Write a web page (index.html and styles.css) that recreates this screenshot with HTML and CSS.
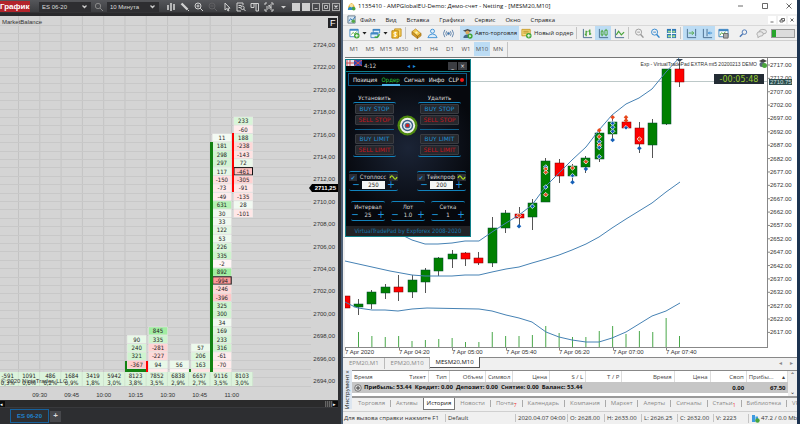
FILE: index.html
```html
<!DOCTYPE html>
<html lang="ru">
<head>
  <meta charset="UTF-8">
  <meta name="viewport" content="width=device-width, initial-scale=1">
  <title>MESM20,M10</title>
  <link rel="stylesheet" href="styles.css">
</head>
<body>
<div class="desktop">

  <!-- NinjaTrader window -->
  <section class="ninja">
    <header class="nt-bar">
      <h1 class="nt-title">График</h1>
      <select class="nt-select" aria-label="Инструмент"><option>ES 06-20</option></select>
      <button class="nt-btn" aria-label="Поиск"><svg viewBox="0 0 10 10" class="dim"><circle cx="4" cy="4" r="2.7"/><path d="M6 6l3 3"/></svg></button>
      <select class="nt-select" aria-label="Интервал"><option>10 Минута</option></select>
      <div class="nt-tools">
        <button class="nt-btn" aria-label="Бары"><svg viewBox="0 0 10 10"><path d="M2 3v5M5 1v8M8 2v6" stroke-width="1.6"/></svg></button>
        <button class="nt-btn" aria-label="Рисование"><svg viewBox="0 0 10 10"><path d="M1.5 1.5l6 6" stroke-width="2.4"/><path d="M7.5 7.5L9 9"/></svg></button>
        <button class="nt-btn" aria-label="Увеличить"><svg viewBox="0 0 10 10"><circle cx="4" cy="4" r="3"/><path d="M6.2 6.2L9 9M2.5 4h3M4 2.5v3"/></svg></button>
        <button class="nt-btn" aria-label="Уменьшить"><svg viewBox="0 0 10 10" class="off"><circle cx="4" cy="4" r="3"/><path d="M6.2 6.2L9 9M2.5 4h3"/></svg></button>
        <button class="nt-btn" aria-label="Курсор"><svg viewBox="0 0 10 10"><path d="M3 1v7l1.7-1.5L6 9l1-.5-1.2-2.3H8z"/></svg></button>
        <button class="nt-btn" aria-label="Данные"><svg viewBox="0 0 10 10"><path d="M7 3V1H1v8h4M2.5 3.5h3M2.5 5.5h2"/><circle cx="6.5" cy="5.8" r="1.7"/><path d="M7.7 7l1.8 2"/></svg></button>
        <button class="nt-btn" aria-label="Панель"><svg viewBox="0 0 10 10"><path d="M1 1.5h7.5V9H6V1.5M1 1.5v4h3v-4"/></svg></button>
        <button class="nt-btn" aria-label="Индикаторы"><svg viewBox="0 0 10 10"><path d="M1 3V1h2M7 1h2v2M1 7v2h2M7 9h2V7M3 8V4M5 7V3l2 3M7 2v6"/></svg></button>
        <button class="nt-btn" aria-label="Ещё"><svg viewBox="0 0 10 10"><path class="solid" d="M3 4h5L5.5 6.5z"/></svg></button>
      </div>
      <div class="nt-win">
        <span class="swatch"></span>
        <span class="swatch"></span>
        <button class="nt-sys" aria-label="Свернуть"><svg viewBox="0 0 8 8"><path d="M2 6h4"/></svg></button>
        <button class="nt-sys" aria-label="Развернуть"><svg viewBox="0 0 8 8"><path d="M2 2h4v4H2z"/></svg></button>
        <button class="nt-sys" aria-label="Закрыть"><svg viewBox="0 0 8 8"><path d="M2 2l4 4M6 2L2 6" stroke-width="1.5"/></svg></button>
      </div>
    </header>
    <svg id="ladder" class="chart ladder" viewBox="0 16 338 384"></svg>
    <div class="nt-scroll"><span class="end">◂</span><span class="grip"></span><span class="end">▸</span></div>
    <nav class="nt-tabs">
      <button class="nt-tab">ES 06-20</button>
      <button class="nt-add" aria-label="Добавить">+</button>
    </nav>
  </section>

  <!-- MetaTrader window -->
  <section class="meta">
    <header class="mt-title">
      <svg viewBox="0 0 10 10" class="ico"><path d="M1 8Q1 3 5 1q4 2 4 7z" fill="#e7b437"/><path d="M1 9Q1 5 5 5t4 4z" fill="#2e8dcc"/><circle cx="5" cy="4" r="2" fill="#f8e2a0"/><circle cx="7.5" cy="7.5" r="2" fill="#4aa53c"/></svg>
      <h2>1135410 - AMPGlobalEU-Demo: Демо-счет - Netting - [MESM20,M10]</h2>
      <div class="mt-sys">
        <button aria-label="Свернуть"><svg viewBox="0 0 8 8"><path d="M1 4h5"/></svg></button>
        <button aria-label="Развернуть"><svg viewBox="0 0 8 8"><path d="M1.5 1.5h5v5h-5z"/></svg></button>
        <button aria-label="Закрыть"><svg viewBox="0 0 8 8"><path d="M1.5 1.5l5 5M6.5 1.5l-5 5"/></svg></button>
      </div>
    </header>

    <nav class="mt-menu">
      <svg viewBox="0 0 10 10" class="ico"><path d="M1 1h8v8H1z" fill="#d6e6f2" stroke="#678"/><path d="M2 7l2-3 2 2 3-4" stroke="#2a72b5" fill="none"/><circle cx="7" cy="7" r="2" fill="#55a845"/></svg>
      <a href="#">Файл</a><a href="#">Вид</a><a href="#">Вставка</a><a href="#">Графики</a><a href="#">Сервис</a><a href="#">Окно</a><a href="#">Справка</a>
      <div class="mdi">
        <button aria-label="Свернуть окно"><svg viewBox="0 0 8 8"><path d="M2.5 6h3"/></svg></button>
        <button aria-label="Восстановить окно"><svg viewBox="0 0 8 8"><path d="M2 4h3v2H2zM3.5 4V2.5h3V5H5"/></svg></button>
        <button aria-label="Закрыть окно"><svg viewBox="0 0 8 8"><path d="M2.5 2.5l3 3M5.5 2.5l-3 3"/></svg></button>
      </div>
    </nav>

    <div class="mt-tools">
      <button class="tb" aria-label="Новый график"><svg viewBox="0 0 12 12"><path d="M1 1.5h9v8H1z" fill="#fff" stroke="#3f87c4"/><path d="M1 2h9" stroke="#3f87c4" stroke-width="2"/><path d="M2.5 7l2-2L6 6l2.5-2" stroke="#58a840" fill="none"/><circle cx="8.5" cy="8.5" r="3" fill="#3fa535"/><path d="M8.5 6.7v3.6M6.7 8.5h3.6" stroke="#fff"/></svg></button>
      <span class="caret"></span>
      <button class="tb" aria-label="Профили"><svg viewBox="0 0 12 12"><path d="M3.5 1.5h7v4h-7zM1 5.500h7.500v5H1z" fill="#e2f0fb" stroke="#3f87c4"/><path d="M1 6h7.5M3 2h8" stroke="#3f87c4" stroke-width="2"/><path d="M5 9.500c2 1.500 5 0 5-3" stroke="#3fa535" stroke-width="1.5" fill="none"/></svg></button>
      <span class="caret"></span>
      <button class="tb" aria-label="Обзор рынка"><svg viewBox="0 0 12 12"><path d="M4 1h7v8H4z" fill="#f4d264" stroke="#c48e18"/><path d="M1 3h7v8H1z" fill="#f2bd31" stroke="#b98312"/><path d="M6 5H4q-1.500 1 0 1.800l1 .2q1.500 1 0 2H3M4.500 4v6" stroke="#fff" fill="none"/></svg></button>
      <span class="sep"></span>
      <button class="tb" aria-label="Навигатор"><svg viewBox="0 0 12 12"><path d="M1 4l4-3 6 5-4 3z" fill="#f3c84b" stroke="#a9761a" stroke-width=".7"/><path d="M1 4v3l6 4.500V9zM7 9v2.500L11 8.500V6z" fill="#d59b26" stroke="#94640f" stroke-width=".6"/><circle cx="6" cy="5" r="1.3" fill="#fff3b0"/></svg></button>
      <button class="tb" aria-label="Терминал"><svg viewBox="0 0 12 12"><circle cx="6" cy="3.5" r="2.2" fill="#dcecf9" stroke="#3c8fd4"/><path d="M1 10.500q1-4 5-4t5 4z" fill="#dcecf9" stroke="#3c8fd4"/></svg></button>
      <button class="tb" aria-label="Сигналы"><svg viewBox="0 0 12 12" fill="none" stroke="#5a7fa8"><circle cx="6" cy="6" r="1.2" fill="#3678b8"/><path d="M4 3.500q-2 2.500 0 5M8 3.500q2 2.500 0 5M2 2q-3 4 0 8M10 2q3 4 0 8"/></svg></button>
      <button class="tb wide on"><svg viewBox="0 0 12 12"><path d="M1 3l5-2 5 2-5 2z" fill="#444"/><circle cx="6" cy="5" r="2.2" fill="#d9a860"/><path d="M1.5 11q0-4 4.500-4t4 4z" fill="#44688e"/><circle cx="8.8" cy="8.8" r="2.8" fill="#3fa535"/><path d="M8 7.300l2.300 1.500L8 10.300z" fill="#fff"/></svg>Авто-торговля</button>
      <button class="tb wide"><svg viewBox="0 0 12 12"><path d="M1 1.500h9v7H1z" fill="#f7dd83" stroke="#c99b24"/><path d="M2.500 3.500h6M2.500 5.500h6" stroke="#b48a1b"/><circle cx="8.5" cy="8.5" r="3" fill="#3fa535"/><path d="M8.5 6.700v3.600M6.700 8.500h3.600" stroke="#fff"/></svg>Новый ордер</button>
      <span class="sep"></span>
      <button class="tb" aria-label="Бары"><svg viewBox="0 0 12 12" fill="none" stroke="#4aa53c"><path d="M1.5 1v9.500H11" stroke="#456a8c"/><path d="M4.500 3v6M3 7h1.500M4.500 4H6M8.500 1.500v6M7 3.500h1.500M8.500 6.500H10" stroke-width="1.4"/></svg></button>
      <button class="tb on" aria-label="Свечи"><svg viewBox="0 0 12 12" fill="none" stroke="#4aa53c"><path d="M1.500 1v9.500H11" stroke="#456a8c"/><path d="M3.500 3.500h2v4h-2zM4.500 2v1.500M4.500 7.500V9M7.500 2.500H10v5H7.500zM8.800 1v1.500M8.800 7.500V9"/></svg></button>
      <button class="tb" aria-label="Линия"><svg viewBox="0 0 12 12" fill="none" stroke="#4aa53c"><path d="M1.500 1v9.500H11" stroke="#456a8c"/><path d="M2.500 7.500l2.500-4 3 4 3-3" stroke-width="1.3"/></svg></button>
      <span class="sep"></span>
      <button class="tb" aria-label="Уменьшить"><svg viewBox="0 0 12 12" fill="none" stroke="#999"><circle cx="5" cy="4.5" r="3.3"/><path d="M7.300 7l3 3.500" stroke-width="1.6"/><path d="M3.500 4.500h3"/></svg></button>
      <button class="tb" aria-label="Увеличить"><svg viewBox="0 0 12 12" fill="none" stroke="#2f86cf"><circle cx="5" cy="4.5" r="3.3"/><path d="M7.300 7l3 3.500" stroke-width="1.6"/><path d="M3.500 4.500h3"/></svg></button>
      <button class="tb" aria-label="Плитка"><svg viewBox="0 0 12 12"><path d="M1 1h10v10H1z" fill="#2f79b8"/><path d="M2 3h3.500v2H2zM7 3h3v2H7zM2 8h3.500v2H2zM7 8h3v2H7z" fill="#a7dd8e"/><path d="M6 1v10M1 6h10" stroke="#fff"/></svg></button>
      <span class="sep"></span>
      <button class="tb on" aria-label="Автопрокрутка"><svg viewBox="0 0 12 12" fill="none" stroke="#456a8c"><path d="M1.500 1v9.500M1.500 10.500H11M10.500 1v8"/><path d="M3 5.500h5M6.500 3.500l2 2-2 2" stroke="#4aa53c"/></svg></button>
      <button class="tb on" aria-label="Сдвиг"><svg viewBox="0 0 12 12" fill="none" stroke="#456a8c"><path d="M1.500 1v9.500H11M5.500 1v8"/><path d="M7 5.500h4M8.500 4L7 5.500 8.500 7" stroke="#2f86cf"/></svg></button>
      <button class="tb" aria-label="Индикаторы"><svg viewBox="0 0 12 12"><path d="M1 1.500h10v8H1z" fill="#fff" stroke="#3f87c4"/><path d="M1 2.500h10" stroke="#3f87c4" stroke-width="2"/><path d="M2 8l2-3 2 2 2-3" stroke="#4aa53c" fill="none"/><path d="M6 6h5v5H6z" fill="#aaa" stroke="#666"/></svg></button>
      <div class="mt-right">
        <button class="tb" aria-label="Поиск"><svg viewBox="0 0 12 12" fill="none" stroke="#4573b3"><circle cx="7" cy="4.5" r="2.5"/><path d="M5 6.500L2 9.500" stroke-width="1.5"/></svg></button>
        <button class="tb" aria-label="Чат"><svg viewBox="0 0 12 12" fill="#e8e8e8" stroke="#999" stroke-width=".8"><ellipse cx="7.5" cy="4" rx="4" ry="2.5"/><path d="M1 6.500q0-2.500 3.500-2.500T8 6.500 4.500 9L2 10.500V8.500Q1 8 1 6.500z"/></svg></button>
        <div class="meter"><span></span></div>
      </div>
    </div>

    <div class="mt-frames">
      <button>M1</button><button>M5</button><button>M15</button><button>M30</button><button>H1</button><button>H4</button><button>D1</button><button>W1</button><button class="on">M10</button><button>MN</button>
      <span class="sep"></span>
    </div>

    <div class="mt-chart">
      <svg id="candles" class="chart" viewBox="345 58 452 299"></svg>

      <!-- VirtualTradePad -->
      <form class="pad">
        <div class="pad-head">
          <svg viewBox="0 0 16 8" class="flags"><path d="M0 0h8v6H0z" fill="#dfe4f2"/><path d="M1 0v6M4 0v6M0 3h8" stroke="#d04a4a"/><path d="M8 0h8v6H8z" fill="#3049b0"/><path d="M8 0l8 6M16 0L8 6" stroke="#e04848"/></svg>
          <span class="clock">4:12</span>
          <span class="arrows"><i>◂</i><i>▸</i></span>
          <button type="button" aria-label="Свернуть панель">_</button>
          <button type="button" aria-label="Закрыть панель">×</button>
        </div>
        <nav class="pad-tabs">
          <a href="#">Позиция</a><a href="#" class="on">Ордер</a><a href="#">Сигнал</a><a href="#">Инфо</a><a href="#">CLP</a><span class="dot"></span>
        </nav>
        <div class="pad-orders">
          <div class="col">
            <h3>Установить</h3>
            <div class="group">
              <button type="button" class="buy">BUY STOP</button>
              <button type="button" class="sell">SELL STOP</button>
              <hr>
              <button type="button" class="buy">BUY LIMIT</button>
              <button type="button" class="sell">SELL LIMIT</button>
            </div>
          </div>
          <svg viewBox="0 0 22 22" class="target"><circle cx="11" cy="11" r="10.5" fill="#4f8a10"/><circle cx="11" cy="11" r="8" fill="#f0f0ea"/><circle cx="11" cy="11" r="6" fill="#3b5f88"/><circle cx="11" cy="11" r="4.5" fill="#e8eef2"/><circle cx="11" cy="11" r="3" fill="#4a6f99"/><circle cx="11" cy="11" r="1.8" fill="#d02020"/></svg>
          <div class="col">
            <h3>Удалить</h3>
            <div class="group">
              <button type="button" class="buy">BUY STOP</button>
              <button type="button" class="sell">SELL STOP</button>
              <hr>
              <button type="button" class="buy">BUY LIMIT</button>
              <button type="button" class="sell">SELL LIMIT</button>
            </div>
          </div>
        </div>
        <div class="pad-stops">
          <div class="group">
            <div class="line"><input type="checkbox" id="sl-on" checked><label for="sl-on">Стоплосс</label><svg viewBox="0 0 9 7" class="wave"><path d="M1 4q1.500-4 3.500-.5T8 3"/></svg></div>
            <div class="line step"><button type="button" aria-label="Меньше">−</button><input type="text" class="lit" value="250" aria-label="Стоплосс"><button type="button" aria-label="Больше">+</button></div>
          </div>
          <div class="group">
            <div class="line"><input type="checkbox" id="tp-on" checked><label for="tp-on">Тейкпроф</label><svg viewBox="0 0 9 7" class="wave"><path d="M1 4q1.500-4 3.500-.5T8 3"/></svg></div>
            <div class="line step"><button type="button" aria-label="Меньше">−</button><input type="text" class="lit" value="200" aria-label="Тейкпрофит"><button type="button" aria-label="Больше">+</button></div>
          </div>
        </div>
        <div class="pad-params">
          <div class="group"><label for="gap">Интервал</label><div class="line step"><button type="button" aria-label="Меньше">−</button><input type="text" id="gap" value="25"><button type="button" aria-label="Больше">+</button></div></div>
          <div class="group"><label for="lot">Лот</label><div class="line step"><button type="button" aria-label="Меньше">−</button><input type="text" id="lot" value="1.0"><button type="button" aria-label="Больше">+</button></div></div>
          <div class="group"><label for="net">Сетка</label><div class="line step"><button type="button" aria-label="Меньше">−</button><input type="text" id="net" value="1"><button type="button" aria-label="Больше">+</button></div></div>
        </div>
        <footer class="pad-foot">VirtualTradePad by Expforex 2008-2020</footer>
      </form>
    </div>

    <nav class="mt-charttabs">
      <a href="#">EPM20,M1</a><a href="#">EPM20,M10</a><a href="#" class="on">MESM20,M10</a>
      <span class="scrollers"><i>◂</i><i>▸</i></span>
    </nav>

    <div class="toolbox">
      <div class="tool-side"><button aria-label="Закрыть">×</button><span>Инструмент</span></div>
      <div class="tool-main">
        <div class="tool-table">
          <table>
            <colgroup><col class="c76"><col class="c21"><col class="c36"><col class="c27"><col class="c37"><col class="c36"><col class="c36"><col class="c52"><col class="c36"><col class="c36"><col class="c41"></colgroup>
            <thead>
              <tr><th><div class="pair"><span>Время</span><span>Тикет</span></div></th><th>Тип</th><th>Объем</th><th>Символ</th><th>Цена</th><th>S / L</th><th>T / P</th><th>Время</th><th>Цена</th><th>Своп</th><th><div class="pair"><span>Прибы...</span><span>▴</span></div></th></tr>
            </thead>
            <tbody>
              <tr><td colspan="9" class="sum"><svg viewBox="0 0 8 8"><circle cx="4" cy="4" r="3.3" fill="#ddd" stroke="#555" stroke-width=".7"/><path d="M2 4h4M4 2v4" stroke="#444"/></svg><span>Прибыль: 53.44</span><span>Кредит: 0.00</span><span>Депозит: 0.00</span><span>Снятие: 0.00</span><span>Баланс: 53.44</span></td><td>0.00</td><td>67.50</td></tr>
            </tbody>
          </table>
          <div class="vscroll"><i>⌃</i><i>⌄</i></div>
        </div>
        <nav class="tool-tabs">
          <a href="#">Торговля</a><a href="#">Активы</a><a href="#" class="on">История</a><a href="#">Новости</a><a href="#">Почта<sub>7</sub></a><a href="#">Календарь</a><a href="#">Компания</a><a href="#">Маркет</a><a href="#">Алерты</a><a href="#">Сигналы</a><a href="#">Статьи<sub>1</sub></a><a href="#">Библиотека</a><a href="#">VPS</a>
        </nav>
      </div>
    </div>

    <footer class="status">
      <span>Для вызова справки нажмите F1</span>
      <span>Default</span>
      <span>2020.04.07 04:00</span>
      <span>O: 2628.00</span>
      <span>H: 2633.00</span>
      <span>L: 2626.25</span>
      <span>C: 2632.00</span>
      <span>V: 2223</span>
      <span class="net"><svg viewBox="0 0 9 9"><path d="M1 1h3v7H1zM4.500 2.500H7V8H4.500z" fill="#3d9be0"/><circle cx="6.5" cy="6.5" r="2.2" fill="#4aa53c"/></svg>47.2 / 0.0 Mb</span>
    </footer>
  </section>
</div>
<script src="charts.js"></script>
</body>
</html>
```
FILE: styles.css
```css
* {
  box-sizing: border-box;
}

body {
  margin: 0;
  background: #1c3350;
  font-family: "Open Sans", "Noto Sans", sans-serif;
  font-size: 6px;
  line-height: 8px;
  color: #222;
}

button, input, select {
  font: inherit;
  color: inherit;
  margin: 0;
  padding: 0;
  border: 0;
  background: none;
}

a {
  color: inherit;
  text-decoration: none;
}

h1, h2, h3 {
  margin: 0;
  font-size: inherit;
  font-weight: normal;
}

i {
  font-style: normal;
}

svg {
  display: block;
}

.desktop {
  display: grid;
  grid-template-columns: 343fr 457fr;
  min-height: 100vh;
}

.chart {
  width: 100%;
  height: auto;
}

/* ---------- NinjaTrader ---------- */
.ninja {
  min-width: 0;
  background: #2d2e31;
  border-right: 2px solid #4d6077;
  padding-right: 3px;
  font-family: "Liberation Sans", Arial, sans-serif;
  color: #ddd;
}

.nt-bar {
  display: flex;
  align-items: center;
  height: 16px;
  margin-right: -2px;
  padding-bottom: 3px;
  background: linear-gradient(#55565a, #3c3d40 12px, #29292b 13px);
}

.nt-title {
  width: 30px;
  height: 11px;
  margin-right: 9px;
  background: #b3242b;
  color: #fff;
  font-size: 8px;
  font-weight: bold;
  line-height: 11px;
}

.nt-select {
  width: 52px;
  height: 10px;
  padding-left: 3px;
  appearance: none;
  background: #2e2e31 url("data:image/svg+xml,%3Csvg xmlns='http://www.w3.org/2000/svg' width='5' height='4'%3E%3Cpath d='M.5 .5l2 2 2-2' fill='none' stroke='%23ccc' stroke-width='1.3'/%3E%3C/svg%3E") no-repeat right 4px center;
}

.nt-btn {
  flex: none;
  width: 14px;
}

.nt-btn svg {
  width: 10px;
  height: 10px;
  margin: 0 auto;
  fill: none;
  stroke: #d0d0d0;
}

.nt-btn svg.dim {
  stroke: #888;
}

.nt-btn svg.off {
  stroke: #606063;
}

.nt-btn .solid {
  fill: #d0d0d0;
  stroke: none;
}

.nt-select + .nt-btn {
  width: 16px;
}

.nt-tools {
  display: flex;
  margin-left: 5px;
}

.nt-win {
  display: flex;
  gap: 2px;
  margin-left: auto;
}

.swatch {
  width: 8px;
  height: 8px;
  background: #cfcfcf;
}

.nt-sys {
  width: 8px;
  height: 8px;
  border: 1px solid #aaa;
}

.nt-sys svg {
  width: 6px;
  height: 6px;
  fill: none;
  stroke: #ddd;
}

.ladder {
  background: #d4d4d4;
}

.nt-scroll {
  display: flex;
  align-items: center;
  height: 8px;
  background: #2a2a2b;
  border-bottom: 1px solid #38393c;
}

.nt-scroll .end {
  width: 5px;
  height: 6px;
  background: #0c0c0c;
  color: #fff;
  font-size: 5px;
  line-height: 6px;
}

.nt-scroll .grip {
  width: 7px;
  height: 6px;
  margin-left: auto;
  margin-right: 1px;
  background: repeating-linear-gradient(90deg, #666 0 1px, #3a3a3a 1px 2px);
}

.nt-tabs {
  display: flex;
  align-items: center;
  gap: 1px;
  height: 16px;
  padding-left: 10px;
}

.nt-tab {
  width: 39px;
  height: 14px;
  border: 1px solid #17619c;
  color: #1f83cf;
  font-weight: bold;
}

.nt-add {
  width: 11px;
  height: 11px;
  background: #47484c;
  color: #ddd;
  font-size: 8px;
  font-weight: bold;
}

/* ---------- MetaTrader ---------- */
.meta {
  min-width: 0;
  display: flex;
  flex-direction: column;
  background: #f0f0f0;
  border-right: 3px solid #1c3350;
}

.mt-title {
  display: flex;
  align-items: center;
  height: 14px;
  padding: 0 4px 2px 4px;
  background: #fff;
  color: #111;
}

.ico {
  flex: none;
  width: 9px;
  height: 9px;
  margin-right: 2px;
}

.mt-sys {
  display: flex;
  gap: 16px;
  margin-left: auto;
}

.mt-sys svg,
.mdi svg {
  width: 8px;
  height: 8px;
  fill: none;
  stroke: #444;
  stroke-width: .8;
}

.mt-menu {
  display: flex;
  align-items: center;
  gap: 10px;
  height: 11px;
  padding: 0 1px 0 4px;
}

.mt-menu .ico {
  margin-right: -6px;
}

.mdi {
  display: flex;
  gap: 2px;
  margin-left: auto;
}

.mdi button {
  background: #fff;
}

.mt-tools {
  display: flex;
  align-items: center;
  height: 16px;
  padding-left: 3px;
  border-top: 1px solid #d8d8d8;
  border-bottom: 1px solid #cfcfcf;
}

.tb {
  flex: none;
  width: 16px;
  height: 14px;
}

.tb svg {
  flex: none;
  width: 11px;
  height: 11px;
  margin: 0 auto;
}

.tb.on {
  background: #bcdcf4;
}

.tb.wide {
  display: flex;
  align-items: center;
  gap: 2px;
  width: auto;
  margin-left: 4px;
  padding: 0 2px;
}

.tb.wide + .tb.wide {
  margin-left: 0;
}

.caret {
  flex: none;
  width: 5px;
  height: 3px;
  background: #222;
  clip-path: polygon(0 0, 100% 0, 50% 100%);
}

.sep {
  flex: none;
  width: 1px;
  height: 12px;
  margin: 0 2px 0 1px;
  background: #c4c4c4;
}

.mt-right {
  display: flex;
  align-items: center;
  gap: 2px;
  margin-left: auto;
  padding-right: 2px;
}

.meter {
  width: 24px;
  height: 9px;
  border: 1px solid #999;
  background: #dcdcdc;
}

.meter span {
  display: block;
  width: 4px;
  height: 7px;
  background: #27a52b;
}

.mt-frames {
  display: flex;
  align-items: center;
  height: 16px;
  padding-left: 3px;
  color: #555;
}

.mt-frames button {
  width: 16px;
  height: 14px;
}

.mt-frames .on {
  background: #bcdcf4;
}

.mt-frames .sep {
  height: 15px;
}

.mt-chart {
  position: relative;
  margin-left: 2px;
  border-top: 1px solid #777;
  background: #fff;
}

/* ---------- trade pad, floats over the chart ---------- */
.pad {
  position: absolute;
  top: 1px;
  left: 0;
  width: 126px;
  border: 1px solid #10808a;
  background: radial-gradient(circle at 50% 50%, #1b2436, #06080d 65%);
  color: #d8d8d8;
  font-family: "DejaVu Sans Condensed", "DejaVu Sans", sans-serif;
}

.pad-head {
  display: flex;
  align-items: center;
  height: 12px;
  padding-right: 3px;
  border-bottom: 1px solid #10808a;
  background: #000;
}

.flags {
  align-self: flex-start;
  width: 16px;
  height: 8px;
}

.clock {
  margin-left: 2px;
}

.arrows {
  display: flex;
  gap: 3px;
  margin: 0 auto;
  color: #1f8fe0;
}

.pad-head button {
  width: 9px;
  height: 8px;
  margin-left: 1px;
  background: #3b3d42;
  color: #eee;
}

.pad-tabs {
  display: flex;
  align-items: center;
  justify-content: space-between;
  height: 13px;
  margin: 1px 3px 0 2px;
  padding: 0 2px 0 4px;
  border: 1px solid #0d5a86;
  color: #eee;
}

.pad-tabs .on {
  color: #2fc83a;
  box-shadow: 0 2px #4fb4ea;
}

.pad-tabs .dot {
  width: 4px;
  height: 4px;
  margin-left: -3px;
  border-radius: 2px;
  background: #f01818;
}

.pad-orders {
  display: flex;
  align-items: center;
  justify-content: space-between;
  margin: 8px 9px 0 7px;
}

.pad-orders .col {
  width: 43px;
}

.pad-orders h3 {
  text-align: center;
}

.pad .group {
  border-top: 1px solid #1183bd;
  border-bottom: 1px solid #1183bd;
  border-radius: 2px;
}

.pad-orders .group {
  display: flex;
  flex-direction: column;
  gap: 1px;
  padding: 1px 2px;
}

.pad-orders .group button {
  height: 10px;
  border: 1px solid #3a3c42;
  border-radius: 1px;
  background: #26282d;
  font-family: "DejaVu Sans", sans-serif;
  line-height: 8px;
}

.pad-orders .buy {
  color: #1c8ed2;
}

.pad-orders .sell {
  color: #c8151e;
}

.pad-orders hr {
  width: 100%;
  height: 1px;
  margin: 3px 0;
  border: 0;
  background: #0f6390;
}

.target {
  width: 21px;
  height: 21px;
}

.pad-stops {
  display: flex;
  justify-content: space-between;
  margin: 14px 4px 0 3px;
}

.pad-stops .group {
  width: 49px;
  padding: 1px 0;
}

.pad .line {
  display: flex;
  align-items: center;
  justify-content: space-between;
  height: 8px;
}

.pad input[type="checkbox"] {
  width: 8px;
  height: 7px;
  appearance: none;
  background: #2b2e35;
}

.pad input[type="checkbox"]:checked::before {
  content: "✔";
  display: block;
  color: #2a9be8;
  line-height: 7px;
  text-align: center;
}

.wave {
  width: 9px;
  height: 7px;
  background: #2b2e35;
  fill: none;
  stroke: #a8d820;
  stroke-width: 1.3;
}

.pad .step {
  justify-content: center;
  gap: 2px;
}

.pad .step button {
  width: 8px;
  height: 8px;
  color: #1f9be0;
  font-size: 10px;
  line-height: 8px;
}

.pad .step input {
  width: 14px;
  height: 8px;
  text-align: center;
}

.pad .step .lit {
  width: 23px;
  background: #f4f4f4;
  color: #222;
}

.pad-params {
  display: flex;
  justify-content: space-between;
  margin: 10px 5px 0 5px;
  text-align: center;
}

.pad-params .group {
  width: 34px;
  padding: 1px 0;
}

.pad-params label {
  display: block;
}

.pad-foot {
  height: 10px;
  margin-top: 5px;
  background: #222326;
  color: #1477ab;
  line-height: 10px;
  text-align: center;
}

/* ---------- chart tabs ---------- */
.mt-charttabs {
  display: flex;
  height: 12px;
  border-top: 1px solid #888;
  color: #888;
  line-height: 10px;
}

.mt-charttabs a {
  padding: 0 5px 0 6px;
  border-right: 1px solid #bbb;
}

.mt-charttabs .on {
  height: 11px;
  margin-top: -1px;
  border-right: 1px solid #555;
  border-bottom: 1px solid #555;
  background: #fff;
  color: #111;
}

.scrollers {
  display: flex;
  gap: 8px;
  margin-left: auto;
  padding-right: 4px;
}

/* ---------- toolbox ---------- */
.toolbox {
  display: flex;
  height: 40px;
  margin-top: 1px;
}

.tool-side {
  display: flex;
  flex-direction: column;
  flex: none;
  width: 9px;
  height: 39px;
  background: #dde6f0;
}

.tool-side button {
  line-height: 5px;
}

.tool-side span {
  flex: 1;
  min-height: 0;
  overflow: hidden;
  writing-mode: vertical-rl;
  transform: rotate(180deg);
  line-height: 9px;
}

.tool-main {
  flex: 1;
  min-width: 0;
  overflow: hidden;
}

.tool-table {
  display: flex;
  height: 28px;
  border-top: 1px solid #888;
  border-bottom: 2px solid #999;
  background: #fff;
}

.tool-table table {
  flex: 1;
  table-layout: fixed;
  width: 100%;
  height: 22px;
  border-collapse: collapse;
}

.c76 { width: 76px; }
.c21 { width: 21px; }
.c27 { width: 27px; }
.c36 { width: 36px; }
.c37 { width: 37px; }
.c41 { width: 41px; }
.c52 { width: 52px; }

.tool-table th {
  height: 11px;
  padding: 0 2px;
  border-right: 1px solid #ddd;
  color: #444;
  font-weight: normal;
  text-align: right;
}

.pair {
  display: flex;
  justify-content: space-between;
}

.tool-table td {
  height: 11px;
  padding: 0 2px;
  background: #c6c6c6;
  color: #111;
  font-weight: bold;
  text-align: right;
}

.tool-table .sum {
  text-align: left;
  white-space: nowrap;
}

.sum svg {
  display: inline-block;
  width: 8px;
  height: 8px;
  margin-right: 2px;
  vertical-align: middle;
}

.sum span {
  margin-right: 3px;
}

.vscroll {
  display: flex;
  flex-direction: column;
  justify-content: space-between;
  flex: none;
  width: 9px;
  background: #eee;
  text-align: center;
}

.tool-tabs {
  display: flex;
  align-items: center;
  height: 11px;
  padding-left: 1px;
  color: #888;
  white-space: nowrap;
}

.tool-tabs a {
  flex: none;
  padding: 0 5px;
  border-right: 1px solid #aaa;
  line-height: 7px;
}

.tool-tabs .on {
  height: 12px;
  margin-left: -1px;
  padding: 0 3px;
  border: 1px solid #777;
  border-top: 0;
  background: #fff;
  color: #111;
  line-height: 10px;
}

.tool-tabs sub {
  color: #e22;
  font-size: 5px;
  line-height: 1px;
}

/* ---------- status bar ---------- */
.status {
  display: grid;
  grid-template-columns: 102fr 70fr 52fr 37fr 37fr 36fr 36fr 35fr 49fr;
  align-items: center;
  height: 13px;
  margin-top: auto;
  border-top: 1px solid #d0d0d0;
  color: #333;
  white-space: nowrap;
}

.status span {
  min-width: 0;
  padding-left: 2px;
  border-left: 1px solid #c4c4c4;
}

.status span:first-child {
  padding-left: 1px;
  border-left: 0;
}

.status .net {
  display: flex;
  align-items: center;
  gap: 1px;
}

.net svg {
  flex: none;
  width: 9px;
  height: 9px;
}

/* ---------- svg text ---------- */
.t-cell {
  font: 6px "DejaVu Sans Condensed", "DejaVu Sans", sans-serif;
  fill: #222;
  text-anchor: middle;
}

.t-axis {
  font: 6px "Liberation Sans", Arial, sans-serif;
  fill: #333;
}

.t-small {
  font-size: 5px;
}

.t-mid {
  text-anchor: middle;
}

.t-end {
  text-anchor: end;
}

.t-bold {
  font-weight: bold;
  fill: #fff;
}

.t-flag {
  font-size: 9px;
  fill: #fff;
}

.t-inv {
  fill: #cfe0e0;
}

.t-timer {
  font: 8px "DejaVu Sans", sans-serif;
  fill: #9acd32;
}
```
FILE: charts.js
```js
const NS = 'http://www.w3.org/2000/svg';

function add(svg, tag, attrs, text) {
  const el = document.createElementNS(NS, tag);
  for (const k in attrs) el.setAttribute(k, attrs[k]);
  if (text !== undefined) el.textContent = text;
  svg.appendChild(el);
  return el;
}

function rect(svg, x, y, w, h, fill, extra) {
  return add(svg, 'rect', Object.assign({ x: x, y: y, width: w, height: h, fill: fill }, extra));
}

function line(svg, x1, y1, x2, y2, stroke, w) {
  return add(svg, 'line', { x1: x1, y1: y1, x2: x2, y2: y2, stroke: stroke, 'stroke-width': w || 1 });
}

/* ---- delta ladder ---- */
const STEP_X = 21.3, STEP_Y = 8.4, TOP = 120.9;

const columns = [
  { col: 6, row: 26, v: [90, 240, 321, -367, 900] },
  { col: 7, row: 25, v: [845, 335, -281, -227, 94, -74] },
  { col: 8, row: 29, v: [56, -10] },
  { col: 9, row: 27, v: [57, 206, 163, -133] },
  { col: 10, row: 2, v: [11, 181, 298, 297, 117, -150, -73, -49, 631, 30, 33, 122, 53, 226, 335, -2,
    892, -994, -246, -396, 325, 300, 34, 169, 233, 316, -61, -70, -103] },
  { col: 11, row: 0, v: [233, -60, 188, -238, -143, 72, -461, -305, -91, -135, 28, -101] }
];
const boxed = [-994, -461];
const totals = [-591, 1091, 486, 1684, 3419, 5942, 8123, 7852, 6838, 6657, 9116, 8103];
const shares = ['0,3%', '0,6%', '0,2%', '0,9%', '1,8%', '3,0%', '3,8%', '3,5%', '2,9%', '2,7%', '3,5%', '3,0%'];
const times = ['09:30', '09:45', '10:00', '10:15', '10:30', '10:45', '11:00'];

function shade(v) {
  const t = Math.pow(Math.min(1, Math.abs(v) / 950), 0.8);
  const hi = Math.round(250 - 14 * t), lo = Math.round(246 - 92 * t);
  return v >= 0 ? `rgb(${lo},${hi},${lo})` : `rgb(255,${lo},${lo})`;
}

function drawLadder() {
  const s = document.getElementById('ladder');
  for (let i = 0; i < 11; i++) line(s, 18.5 + i * STEP_X, 16, 18.5 + i * STEP_X, 387, '#c3c3c3');
  for (let y = 24.5; y < 387; y += STEP_Y) line(s, 0, Math.round(y) + 0.5, 311, Math.round(y) + 0.5, '#c8c8c8');

  columns.forEach(c => c.v.forEach((v, i) => {
    const x = 234 - (11 - c.col) * STEP_X, y = TOP + (c.row + i) * STEP_Y;
    rect(s, x - 0.5, y - 4.2, 19.5, STEP_Y, '#e6e6e4');
    rect(s, x, y - 3.7, 18.5, 7.4, shade(v), boxed.includes(v) ? { stroke: '#111' } : {});
    // the lowest row runs under the totals strip
    if (c.row + i < 30) add(s, 'text', { x: x + 9.2, y: y + 2.3, class: 't-cell' }, v);
  }));

  rect(s, 210, 142, 3, 230, '#128212');
  rect(s, 232, 133, 2, 59, '#ff0000');
  rect(s, 125, 361, 2, 11, '#128212');
  rect(s, 127, 369, 20, 3, '#128212');
  rect(s, 146, 361, 2, 11, '#ff0000');
  rect(s, 189, 369, 2, 3, '#128212');

  rect(s, 0, 372, 253, 14, '#dcf3dc');
  totals.forEach((v, i) => {
    const x = 7.7 + i * STEP_X;
    line(s, x + 10.6, 372, x + 10.6, 386, '#cfe3cf');
    add(s, 'text', { x: x, y: 378, class: 't-cell' }, v);
    add(s, 'text', { x: x, y: 385, class: 't-cell' }, shares[i]);
  });
  add(s, 'text', { x: 1, y: 383, class: 't-axis' }, '© 2020 NinjaTrader, LLC');
  times.forEach((t, i) => add(s, 'text', { x: 39.7 + i * 32, y: 397, class: 't-axis t-mid' }, t));

  for (let i = 0; i <= 15; i++) {
    add(s, 'text', { x: 335, y: 47 + i * 22.4, class: 't-axis t-end' }, (2724 - i * 2) + ',00');
  }
  add(s, 'path', { d: 'M309 188l3-4h26v8h-26z', fill: '#000' });
  add(s, 'text', { x: 336, y: 190, class: 't-axis t-bold t-end' }, '2711,25');
  add(s, 'text', { x: 2, y: 24, class: 't-axis' }, 'MarketBalance');
  rect(s, 328, 18, 9, 10, '#222326');
  add(s, 'text', { x: 330, y: 26, class: 't-axis t-flag' }, 'F');
}

/* ---- candles: [up, top, bottom, high, low] ---- */
const X0 = 358.5, DX = 13.375;
const candles = [
  [1, 304, 307, 299, 315], [1, 292, 304, 290, 309], [1, 287, 293, 284, 299], [0, 287, 292, 275, 301],
  [1, 280, 292, 275, 298], [1, 270, 282, 268, 293], [1, 258, 271, 257, 276], [1, 254, 259, 250, 268],
  [0, 253, 259, 252, 266], [0, 258, 263, 252, 265], [1, 228, 263, 217, 267], [1, 213, 228, 210, 233],
  [0, 214, 218, 207, 226], [1, 203, 217, 199, 230], [1, 161, 202, 158, 202], [0, 163, 176, 159, 183],
  [1, 166, 176, 164, 183], [1, 158, 167, 156, 173], [1, 133, 159, 129, 162], [1, 122, 134, 117, 140],
  [0, 122, 128, 117, 129], [0, 128, 144, 122, 153], [1, 123, 145, 119, 158], [1, 69, 124, 69, 125],
  [0, 69, 82, 62, 87]
];
const volumes = [332, 336, 337, 336, 341, 340, 339, 338, 342, 342, 332, 336, 336, 335, 326, 333, 337, 337, 331, 326, 334, 331, 332, 318, 336];
const bands = [
  '399,233 402,235 412,240 425,244 438,244 452,243 465,241 479,241 492,232 506,223 519,215 532,205 546,186 559,173 572,160 586,147 599,130 612,115 626,104 639,98 652,89 666,72 680,57',
  '345,261 372,267 390,271 412,275 425,276 452,276 465,275 479,275 492,272 506,269 519,267 532,263 546,259 559,255 572,250 586,244 599,237 612,228 626,219 639,211 652,203 666,192 680,182',
  '345,302 353,306 358,308 372,310 385,310 398,311 412,309 427,308 479,309 492,311 506,315 519,318 532,322 546,332 559,337 572,340 586,342 599,342 612,338 626,332 639,324 652,316 666,311 680,303'
];
// deal marks per candle: o = sell, b = buy
const marks = [
  [12, 'o', 215.5], [12, 'b', 226.3], [13, 'b', 206.3],
  [14, 'b', 167], [14, 'o', 169], [14, 'o', 172.3], [14, 'b', 187], [14, 'o', 194.7],
  [16, 'o', 168], [16, 'b', 175.7], [16, 'b', 182.3], [17, 'o', 161.7], [17, 'b', 169],
  [18, 'o', 130.3], [18, 'o', 136.7], [18, 'b', 141.7], [18, 'o', 145], [18, 'b', 147.5], [18, 'b', 156.7],
  [19, 'o', 117.3], [19, 'b', 123.3], [19, 'b', 127.3], [19, 'b', 131.3], [19, 'b', 140],
  [20, 'o', 117.3], [20, 'o', 120.5], [20, 'b', 127.7], [21, 'o', 139], [21, 'b', 148.3]
];

function drawCandles() {
  const s = document.getElementById('candles');
  line(s, 345, 81.5, 768, 81.5, '#bcc8c8');

  volumes.forEach((y, i) => line(s, X0 + i * DX, y, X0 + i * DX, 347, '#4aa84a'));
  rect(s, 345, 296, 5, 12, '#ff0000', { stroke: '#600', 'stroke-width': 0.5 });
  candles.forEach((c, i) => {
    const x = Math.round(X0 + i * DX - 0.5) + 0.5;
    line(s, x, c[3], x, c[4], '#555');
    rect(s, x - 4.5, c[1], 9, c[2] - c[1], c[0] ? '#008000' : '#ff0000', { stroke: c[0] ? '#043' : '#700', 'stroke-width': 0.5 });
  });
  bands.forEach(b => add(s, 'polyline', { points: b, fill: 'none', stroke: '#4682b4', 'stroke-width': 1 }));
  marks.forEach(m => {
    const x = X0 + m[0] * DX, y = m[2];
    const inside = y > candles[m[0]][1] && y < candles[m[0]][2];
    add(s, 'path', {
      d: `M${x} ${y - 2.3}l2.3 2.3-2.3 2.3-2.3-2.3z`,
      fill: m[1] === 'o' ? '#e8481c' : '#1560b8',
      stroke: inside ? '#eef4f8' : 'none', 'stroke-width': 0.8
    });
  });

  line(s, 345, 347.5, 768, 347.5, '#888');
  line(s, 767.5, 58, 767.5, 347, '#888');
  for (let i = 0; i <= 20; i++) {
    const y = 65 + i * 13.37;
    line(s, 767, y, 770, y, '#888');
    add(s, 'text', { x: 770, y: y + 2, class: 't-axis' }, (2717 - i * 5) + '.00');
  }
  rect(s, 769, 79, 23, 6, '#2f4f4f');
  add(s, 'text', { x: 770, y: 84, class: 't-axis t-inv' }, '2710.75');

  ['2020', '04:20', '05:00', '05:40', '06:20', '07:00', '07:40'].forEach((t, i) => {
    const x = Math.round(345 + i * 53.5);
    line(s, x + 0.5, 347, x + 0.5, 350, '#888');
    add(s, 'text', { x: x, y: 354, class: 't-axis' }, '7 Apr ' + t);
  });

  rect(s, 714, 74, 50, 10, '#232c34');
  add(s, 'text', { x: 739, y: 82, class: 't-timer t-mid' }, '-00:05:48');
  add(s, 'text', { x: 757, y: 66, class: 't-axis t-small t-end' }, 'Exp - VirtualTradePad EXTRA mt5 20200213 DEMO');
  add(s, 'path', { d: 'M676 59h7l-3.5 3z', fill: '#345' });
  add(s, 'path', { d: 'M759 61l4-2 4 2-4 2z', fill: '#444' });
  add(s, 'circle', { cx: 762, cy: 64.5, r: 2.5, fill: '#567' });
  add(s, 'circle', { cx: 764.5, cy: 65.5, r: 2.5, fill: '#4aa53c' });
}

drawLadder();
drawCandles();
```
